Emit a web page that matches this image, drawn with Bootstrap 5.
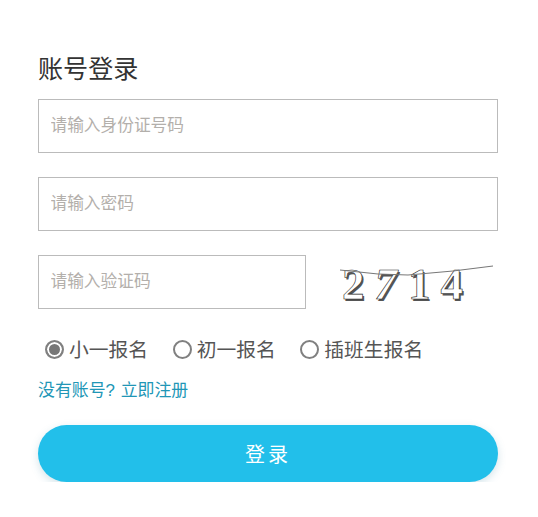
<!DOCTYPE html>
<html lang="zh">
<head>
<meta charset="utf-8">
<title>账号登录</title>
<link rel="stylesheet" href="https://cdn.jsdelivr.net/npm/bootstrap@5.3.0/dist/css/bootstrap.min.css">
<style>
html,body{background:#fff;overflow:hidden}
body{font-family:"Liberation Sans","Noto Sans CJK SC",sans-serif;color:#555}
.login-box{width:460px;margin-left:38px;padding-top:52px}
.login-title{font-size:25.1px;line-height:34px;height:47px;margin:0;color:#333;font-weight:400}
.login-input.form-control{height:54px;border:1px solid #bbb;border-radius:0;padding:0 12px 0 11.5px;font-size:16.7px;color:#333;box-shadow:none}
.login-input::placeholder{color:#b3afab;opacity:1}
.code-row{gap:27px}
.code-input{width:268px;flex:none}
.code-img{width:165px;height:54px;flex:none;position:relative;padding-left:9px}
.cap-digit{font-family:"Liberation Serif",serif;font-weight:700;font-size:45px;line-height:54px;height:54px;color:#fff;-webkit-text-stroke:.6px #222;text-shadow:1.5px 2px 0 #555;flex:none;padding-top:2px}
.cap-gap-a{margin-left:10px}
.cap-gap-b{margin-left:11px}
.cap-gap-c{margin-left:10px}
.cap-line{position:absolute;left:0;top:0;width:165px;height:54px}
.radio-row{height:40px;margin-top:20px;padding-left:7px;gap:24.5px;font-size:19.8px;line-height:28px;color:#555}
.radio-item{gap:5px}
.radio-text{padding-top:1px}
.radio-item .form-check-input{width:19px;height:19px;margin:0;border:2px solid #808080;background-color:#fff;background-image:none;box-shadow:none;flex:none}
.radio-item .form-check-input:checked{background-color:#777;box-shadow:inset 0 0 0 2px #fff;border-color:#808080}
.reg-line{margin-top:10px;font-size:16.9px;line-height:24px;color:#2196b6;height:24px}
.reg-line a{color:#2196b6;text-decoration:none;margin-left:1px}
.login-btn.btn{margin-top:22px;height:57px;width:100%;border:0;border-radius:29px;background:#22bfea;color:#fff;font-size:20px;letter-spacing:3px;padding-top:8px;box-shadow:0 3px 8px rgba(60,130,160,.22)}
</style>
</head>
<body>
<div class="login-box">
  <h1 class="login-title">账号登录</h1>
  <form>
    <div class="mb-4"><input class="form-control login-input" type="text" placeholder="请输入身份证号码"></div>
    <div class="mb-4"><input class="form-control login-input" type="password" placeholder="请输入密码"></div>
    <div class="d-flex code-row">
      <input class="form-control login-input code-input" type="text" placeholder="请输入验证码">
      <div class="d-flex code-img">
        <span class="cap-digit">2</span>
        <span class="cap-digit fst-italic cap-gap-a">7</span>
        <span class="cap-digit cap-gap-b">1</span>
        <span class="cap-digit cap-gap-c">4</span>
        <svg class="cap-line" viewBox="0 0 165 54" aria-hidden="true"><path d="M7 15 L45 19 L75 20 L120 16 L160 11" fill="none" stroke="#777" stroke-width="1"/></svg>
      </div>
    </div>
    <div class="d-flex align-items-center radio-row">
      <label class="d-flex align-items-center radio-item"><input class="form-check-input" type="radio" name="grade" checked><span class="radio-text">小一报名</span></label>
      <label class="d-flex align-items-center radio-item"><input class="form-check-input" type="radio" name="grade"><span class="radio-text">初一报名</span></label>
      <label class="d-flex align-items-center radio-item"><input class="form-check-input" type="radio" name="grade"><span class="radio-text">插班生报名</span></label>
    </div>
    <div class="reg-line">没有账号? <a href="#">立即注册</a></div>
    <button class="btn login-btn" type="button">登录</button>
  </form>
</div>
<script src="https://cdn.jsdelivr.net/npm/bootstrap@5.3.0/dist/js/bootstrap.bundle.min.js"></script>
</body>
</html>
